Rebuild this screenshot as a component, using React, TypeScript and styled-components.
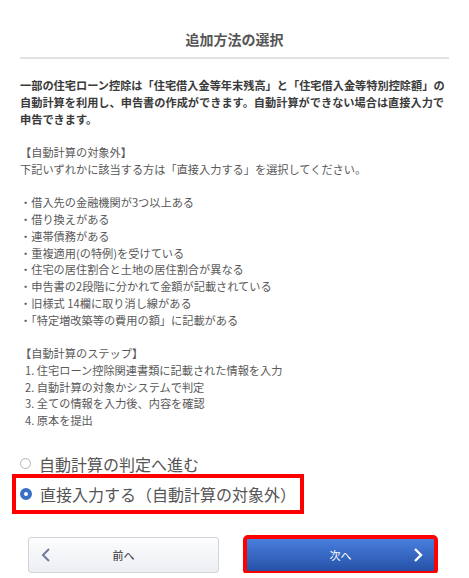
import React from "react";
import styled, { createGlobalStyle } from "styled-components";

const GlobalStyle = createGlobalStyle`
  html, body { margin: 0; padding: 0; background: #fff; }
  body {
    font-family: "Noto Sans CJK JP", "Noto Sans", sans-serif;
    -webkit-font-smoothing: antialiased;
  }
`;

const Page = styled.div`
  width: 469px;
  box-sizing: border-box;
  padding: 29px 20px 0 20px;
`;

const Title = styled.h1`
  margin: 0;
  font-size: 14px;
  line-height: 20px;
  font-weight: 700;
  color: #555;
  text-align: center;
`;

const Divider = styled.hr`
  margin: 8px 0 0 0;
  border: none;
  border-top: 2px solid #e2e2e2;
  height: 0;
`;

const Body = styled.div`
  margin-top: 18px;
  font-size: 11.2px;
  line-height: 16.75px;
  color: #595959;
`;

const Lead = styled.p`
  margin: 0;
  font-weight: 700;
  color: #3a3a3a;
`;

const Block = styled.div`
  margin-top: 16.75px;
`;

const Line = styled.div<{ $indent?: number }>`
  padding-left: ${(p) => p.$indent ?? 0}px;
  white-space: nowrap;
`;

const Options = styled.div`
  margin-top: 23px;
  display: flex;
  flex-direction: column;
  gap: 6px;
`;

const Option = styled.label<{ $highlight?: boolean }>`
  display: flex;
  align-items: center;
  gap: 8px;
  height: 24px;
  width: fit-content;
  font-size: 16px;
  color: #555;
  cursor: pointer;
  outline: ${(p) => (p.$highlight ? "4px solid #ff0000" : "none")};
  outline-offset: 4px;
`;

const Radio = styled.span<{ $checked?: boolean }>`
  width: ${(p) => (p.$checked ? 12 : 11)}px;
  height: ${(p) => (p.$checked ? 12 : 11)}px;
  box-sizing: border-box;
  border-radius: 50%;
  flex-shrink: 0;
  border: ${(p) => (p.$checked ? "4px solid #3b6fc6" : "1px solid #b5b5b5")};
  background: #fff;
`;

const ButtonRow = styled.div`
  margin-top: 31px;
  margin-left: 8px;
  display: flex;
  gap: 26px;
`;

const NavButton = styled.button<{ $primary?: boolean }>`
  width: 191px;
  height: 36px;
  box-sizing: border-box;
  padding: 0 10px;
  display: grid;
  grid-template-columns: 24px 1fr 24px;
  align-items: center;
  font-family: inherit;
  font-size: 11px;
  cursor: pointer;
  border-radius: 3px;
  color: ${(p) => (p.$primary ? "#fff" : "#333")};
  border: 1px solid ${(p) => (p.$primary ? "#2a55aa" : "#cfd3da")};
  background: ${(p) =>
    p.$primary
      ? "linear-gradient(#4a80df, #2450a5)"
      : "linear-gradient(#fdfdfe, #eceef2)"};
  outline: ${(p) => (p.$primary ? "4px solid #ff0000" : "none")};
  outline-offset: -2px;
`;

const Label = styled.span`
  grid-column: 2;
  text-align: center;
`;

const IconCell = styled.span<{ $side: "left" | "right" }>`
  grid-column: ${(p) => (p.$side === "left" ? 1 : 3)};
  grid-row: 1;
  display: flex;
  justify-content: ${(p) => (p.$side === "left" ? "flex-start" : "flex-end")};
  align-items: center;
  padding: 0 2px;
`;

const bullets = [
  "借入先の金融機関が3つ以上ある",
  "借り換えがある",
  "連帯債務がある",
  "重複適用(の特例)を受けている",
  "住宅の居住割合と土地の居住割合が異なる",
  "申告書の2段階に分かれて金額が記載されている",
  "旧様式 14欄に取り消し線がある",
  "「特定増改築等の費用の額」に記載がある",
];

const steps = [
  "1. 住宅ローン控除関連書類に記載された情報を入力",
  "2. 自動計算の対象かシステムで判定",
  "3. 全ての情報を入力後、内容を確認",
  "4. 原本を提出",
];

export default function App() {
  return (
    <>
      <GlobalStyle />
      <Page>
        <Title>追加方法の選択</Title>
        <Divider />
        <Body>
          <Lead>
            一部の住宅ローン控除は「住宅借入金等年末残高」と「住宅借入金等特別控除額」の自動計算を利用し、申告書の作成ができます。自動計算ができない場合は直接入力で申告できます。
          </Lead>
          <Block>
            <Line>【自動計算の対象外】</Line>
            <Line>下記いずれかに該当する方は「直接入力する」を選択してください。</Line>
          </Block>
          <Block>
            {bullets.map((b) => (
              <Line key={b}>・{b}</Line>
            ))}
          </Block>
          <Block>
            <Line>【自動計算のステップ】</Line>
            {steps.map((s) => (
              <Line key={s} $indent={5}>
                {s}
              </Line>
            ))}
          </Block>
        </Body>
        <Options>
          <Option>
            <Radio />
            自動計算の判定へ進む
          </Option>
          <Option $highlight>
            <Radio $checked />
            直接入力する（自動計算の対象外）
          </Option>
        </Options>
        <ButtonRow>
          <NavButton>
            <IconCell $side="left">
              <svg width="10" height="14" viewBox="0 0 10 14">
                <polyline points="8,1 2,7 8,13" fill="none" stroke="#6d7c9c" strokeWidth="2" />
              </svg>
            </IconCell>
            <Label>前へ</Label>
          </NavButton>
          <NavButton $primary>
            <Label>次へ</Label>
            <IconCell $side="right">
              <svg width="10" height="14" viewBox="0 0 10 14">
                <polyline points="2,1 8,7 2,13" fill="none" stroke="#fff" strokeWidth="2.4" />
              </svg>
            </IconCell>
          </NavButton>
        </ButtonRow>
      </Page>
    </>
  );
}
